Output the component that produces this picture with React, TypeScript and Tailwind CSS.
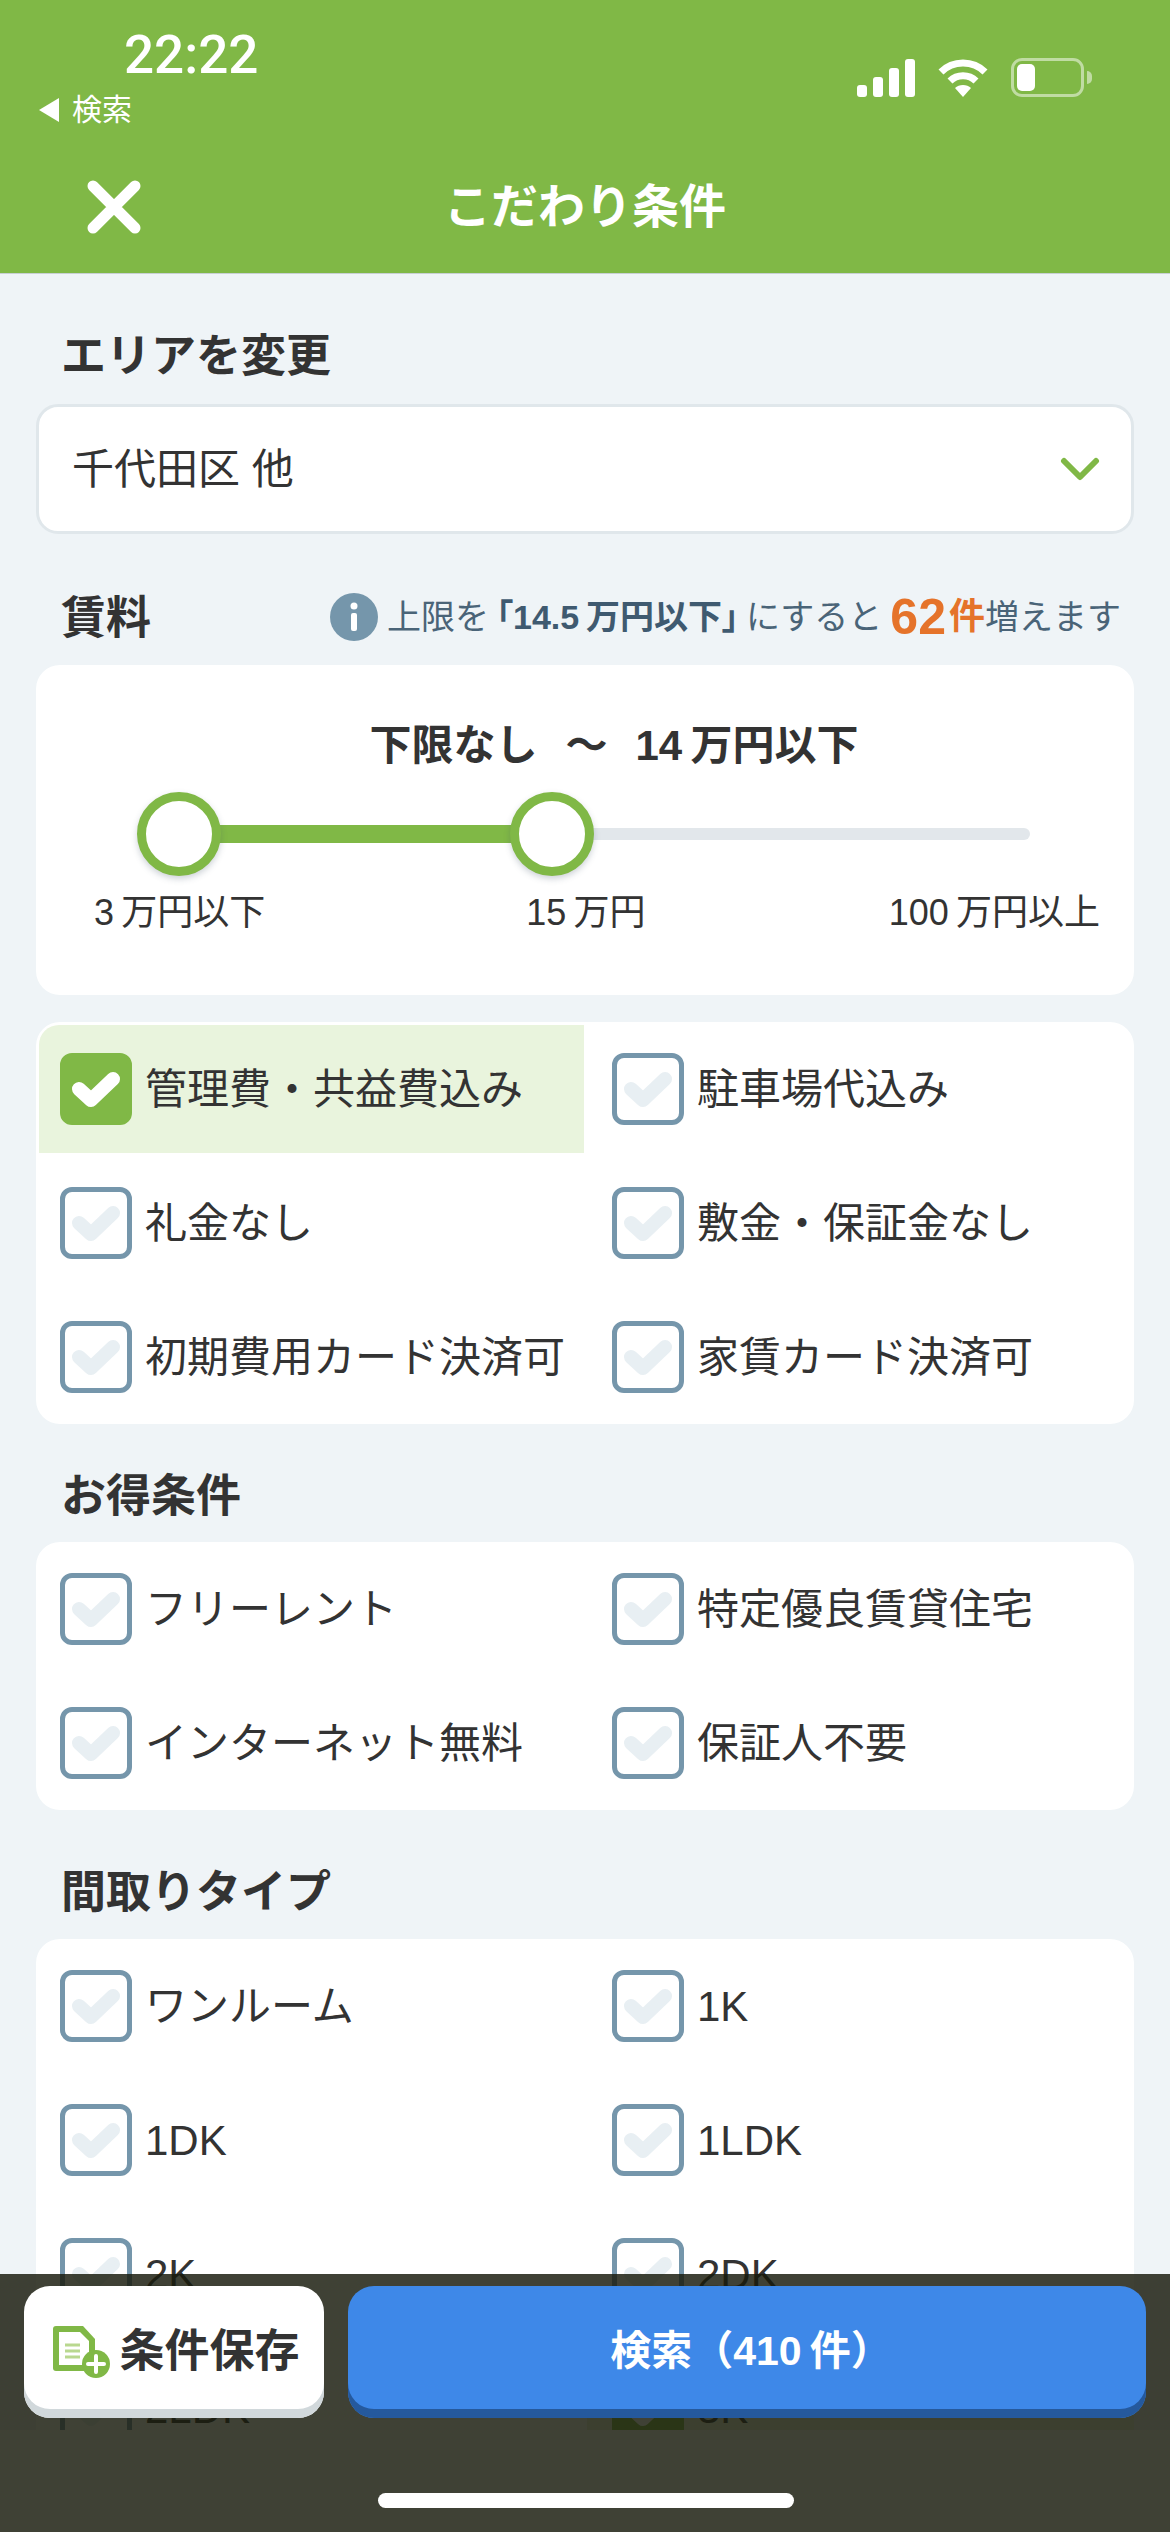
const FONT = "font-['Liberation_Sans','Noto_Sans_CJK_JP',sans-serif]"

interface Option {
  label: string
  checked?: boolean
}

const RENT_OPTIONS: Option[] = [
  { label: '管理費・共益費込み', checked: true },
  { label: '駐車場代込み' },
  { label: '礼金なし' },
  { label: '敷金・保証金なし' },
  { label: '初期費用カード決済可' },
  { label: '家賃カード決済可' },
]

const DEAL_OPTIONS: Option[] = [
  { label: 'フリーレント' },
  { label: '特定優良賃貸住宅' },
  { label: 'インターネット無料' },
  { label: '保証人不要' },
]

const LAYOUT_OPTIONS: Option[] = [
  { label: 'ワンルーム' },
  { label: '1K' },
  { label: '1DK' },
  { label: '1LDK' },
  { label: '2K' },
  { label: '2DK' },
  { label: '2LDK' },
  { label: '3K', checked: true },
]

function CheckBox({ checked }: { checked?: boolean }) {
  return (
    <span
      className={`flex h-[72px] w-[72px] shrink-0 items-center justify-center rounded-[12px] border-[5px] ${
        checked ? 'border-[#80b846] bg-[#80b846]' : 'border-[#7596ab] bg-white'
      }`}
    >
      <svg width="72" height="72" viewBox="0 0 72 72" fill="none" className="shrink-0">
        <path
          d="M19 36 L31 47 L53 26"
          stroke={checked ? '#ffffff' : '#e8eff3'}
          strokeWidth="14"
          strokeLinecap="round"
          strokeLinejoin="round"
        />
      </svg>
    </span>
  )
}

function OptionGrid({ options, className = '' }: { options: Option[]; className?: string }) {
  return (
    <div className={`grid grid-cols-[548px_1fr] rounded-[24px] bg-white ${className}`}>
      {options.map((o, i) => (
        <div key={o.label} className="h-[134px] py-[3px]">
          <label
            className={`ml-[3px] flex h-full items-center gap-[13px] text-[42px] text-[#333] ${
              i % 2 === 0 ? 'pl-[21px]' : 'pl-[25px]'
            } ${o.checked ? 'bg-[#e9f4dd]' : ''} ${o.checked && i === 0 ? 'rounded-tl-[20px]' : ''}`}
          >
            <CheckBox checked={o.checked} />
            <span className="whitespace-nowrap">{o.label}</span>
          </label>
        </div>
      ))}
    </div>
  )
}

function Heading({ children, className = '' }: { children: React.ReactNode; className?: string }) {
  return <h2 className={`h-[60px] pt-[2px] pl-[25px] text-[45px] leading-[60px] font-bold text-[#333] ${className}`}>{children}</h2>
}

function SliderThumb({ className }: { className: string }) {
  return (
    <span
      className={`absolute top-1/2 h-[84px] w-[84px] -translate-x-1/2 -translate-y-1/2 rounded-full border-[9px] border-[#80b846] bg-white shadow-[0_3px_6px_rgba(60,80,100,0.25)] ${className}`}
    />
  )
}

function StatusIcons() {
  return (
    <div className="flex items-center gap-[23px]">
      <svg width="58" height="38" viewBox="0 0 58 38" fill="#fff">
        <rect x="0" y="26" width="10" height="12" rx="3" />
        <rect x="16" y="18" width="10" height="20" rx="3" />
        <rect x="32" y="9" width="10" height="29" rx="3" />
        <rect x="48" y="0" width="10" height="38" rx="3" />
      </svg>
      <svg width="50" height="38" viewBox="0 0 50 38" fill="none" stroke="#fff" strokeWidth="7">
        <path d="M3 13 C15 1 35 1 47 13" />
        <path d="M12 22 C19 15 31 15 38 22" />
        <path d="M25 38 L17 29 C21 25 29 25 33 29 Z" fill="#fff" stroke="none" />
      </svg>
      <div className="flex items-center">
        <div className="flex h-[39px] w-[73px] items-center rounded-[11px] border-[3px] border-white/50 p-[3px]">
          <div className="h-full w-[18px] rounded-[5px] bg-white" />
        </div>
        <div className="ml-[3px] h-[13px] w-[5px] rounded-r-full bg-white/50" />
      </div>
    </div>
  )
}

export default function App() {
  return (
    <div className={`relative flex h-[2532px] w-[1170px] flex-col overflow-hidden bg-white ${FONT}`}>
      {/* Header */}
      <header className="h-[274px] shrink-0 border-b border-[#c8d0d4] bg-[#80b846] text-white">
        <div className="flex h-[136px] items-start justify-between pr-[78px] pl-[38px]">
          <div>
            <div className="ml-[86px] pt-[26px] font-['Roboto',sans-serif] text-[53px] leading-[58px] font-medium">22:22</div>
            <div className="mt-[6px] flex items-center gap-[13px] text-[30px] leading-[40px]">
              <svg width="21" height="26" viewBox="0 0 21 26" fill="#fff">
                <path d="M21 1 V25 L1 13 Z" strokeLinejoin="round" />
              </svg>
              <span>検索</span>
            </div>
          </div>
          <div className="pt-[58px]">
            <StatusIcons />
          </div>
        </div>
        <div className="relative flex h-[137px] items-center justify-center pt-[6px]">
          <svg width="54" height="54" viewBox="0 0 54 54" fill="none" stroke="#fff" strokeWidth="11" strokeLinecap="round" className="absolute top-[44px] left-[87px]">
            <path d="M6 6 L48 48 M48 6 L6 48" />
          </svg>
          <h1 className="text-[47px] font-bold">こだわり条件</h1>
        </div>
      </header>

      {/* Scroll area */}
      <main className="h-[2156px] shrink-0 overflow-hidden bg-[#eff4f7] px-[36px] pt-[51px]">
        <Heading>エリアを変更</Heading>
        <button className="mt-[19px] flex h-[130px] w-full items-center justify-between rounded-[22px] border-[3px] border-[#e0e7eb] bg-white pr-[31px] pl-[33px] text-[42px] text-[#333]">
          <span>千代田区 他</span>
          <svg width="40" height="24" viewBox="0 0 40 24" fill="none" stroke="#80b846" strokeWidth="6" strokeLinecap="round" strokeLinejoin="round">
            <path d="M4 4 L20 20 L36 4" />
          </svg>
        </button>

        <div className="mt-[53px] flex h-[60px] items-center justify-between">
          <Heading>賃料</Heading>
          <div className="flex items-center pr-[13px] text-[34px] whitespace-nowrap text-[#4a6478]">
            <svg width="48" height="48" viewBox="0 0 48 48" className="mr-[9px]">
              <circle cx="24" cy="24" r="24" fill="#7596ab" />
              <circle cx="24" cy="13" r="3.5" fill="#fff" />
              <rect x="21" y="20" width="6" height="18" rx="2" fill="#fff" />
            </svg>
            <span>上限を</span>
            <span className="mx-[7px] font-bold text-[#3f5a70] [font-feature-settings:'palt']">「14.5&thinsp;万円以下」</span>
            <span>にすると</span>
            <span className="ml-[8px] text-[50px] leading-none font-bold text-[#e5732a]">62</span>
            <span className="ml-[3px] text-[36px] font-bold text-[#e5732a]">件</span>
            <span>増えます</span>
          </div>
        </div>

        <section className="mt-[18px] h-[330px] rounded-[24px] bg-white pt-[54px]">
          <p className="flex justify-center pl-[58px] text-[42px] leading-[54px] font-bold whitespace-nowrap text-[#333]">
            <span>下限なし</span>
            <span className="mx-[28px]">～</span>
            <span>14&thinsp;万円以下</span>
          </p>
          <div className="relative mt-[19px] ml-[143px] h-[84px] w-[851px]">
            <div className="absolute top-[36px] right-0 left-[373px] h-[12px] rounded-r-full bg-[#e2e7eb]" />
            <div className="absolute top-[33px] left-0 h-[18px] w-[373px] bg-[#80b846]" />
            <SliderThumb className="left-0" />
            <SliderThumb className="left-[373px]" />
          </div>
          <div className="mt-[14px] flex pr-[34px] pl-[58px] text-[36px] leading-[46px] text-[#333]">
            <span>3&thinsp;万円以下</span>
            <span className="ml-[261px]">15&thinsp;万円</span>
            <span className="ml-auto">100&thinsp;万円以上</span>
          </div>
        </section>

        <OptionGrid options={RENT_OPTIONS} className="mt-[27px]" />

        <Heading className="mt-[41px]">お得条件</Heading>
        <OptionGrid options={DEAL_OPTIONS} className="mt-[17px]" />

        <Heading className="mt-[51px]">間取りタイプ</Heading>
        <OptionGrid options={LAYOUT_OPTIONS} className="mt-[18px]" />
      </main>

      {/* Bottom action bar */}
      <div className="absolute inset-x-0 bottom-0 h-[258px] bg-[#181a0c]/[0.83] px-[24px] pt-[12px]">
        <div className="flex gap-[24px]">
          <button className="flex h-[132px] w-[300px] shrink-0 items-center justify-center gap-[9px] rounded-[26px] bg-white pl-[5px] text-[45px] font-bold text-[#333] shadow-[inset_0_-9px_0_#d1d8db]">
            <svg width="57" height="52" viewBox="0 0 57 52">
              <path d="M3 0 H30 L42 13 V45 H3 a3 3 0 0 1 -3 -3 V3 a3 3 0 0 1 3 -3 Z" fill="#80b846" />
              <path d="M6 6 H27 L36 15 V39 H6 Z" fill="#fff" />
              <path d="M12 19 H27 M12 25 H27 M12 31 H27" stroke="#b9d88f" strokeWidth="3" />
              <circle cx="43" cy="38" r="14" fill="#80b846" />
              <path d="M43 30 V46 M35 38 H51" stroke="#fff" strokeWidth="4" strokeLinecap="round" />
            </svg>
            <span>条件保存</span>
          </button>
          <button className="flex h-[132px] flex-1 items-center justify-center rounded-[26px] bg-[#3e88e8] pl-[8px] text-[41px] font-bold text-white shadow-[inset_0_-9px_0_#25599d]">
            検索（410&thinsp;件）
          </button>
        </div>
        <div className="absolute bottom-[24px] left-[378px] h-[15px] w-[416px] rounded-full bg-white" />
      </div>
    </div>
  )
}
